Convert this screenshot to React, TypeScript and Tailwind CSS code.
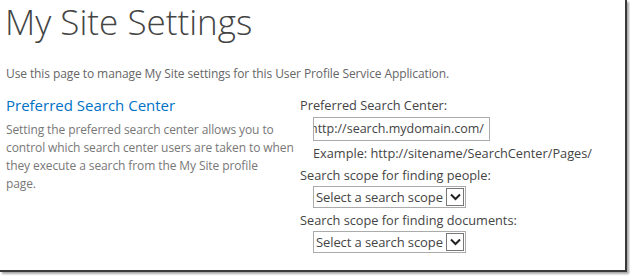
const font = { fontFamily: '"Open Sans", "Noto Sans", sans-serif' };

function ScopeSelect() {
  return (
    <div className="ml-[13px] flex h-[22px] w-[153px] items-center border border-[#ababab] bg-white">
      <span className="flex-1 whitespace-nowrap pl-[2px] text-[13px] leading-none tracking-[-0.1px] text-[#444]">
        Select a search scope
      </span>
      <span className="mr-[1px] flex h-[18px] w-[18px] items-center justify-center border border-[#777] bg-white">
        <svg width="11" height="8" viewBox="0 0 11 8">
          <path d="M1 1.5 L5.5 6 L10 1.5" fill="none" stroke="#222" strokeWidth="2" />
        </svg>
      </span>
    </div>
  );
}

export default function App() {
  return (
    <div className="h-[276px] w-[630px] overflow-hidden bg-white" style={font}>
      <div className="h-[272px] w-[627px] border-r-2 border-b-2 border-[#3a3a3a] bg-white shadow-[2px_2px_2px_rgba(0,0,0,0.35)]">
        <h1 className="pl-[5px] text-[35px] font-light leading-[44px] text-[#444]">My Site Settings</h1>
        <p className="mt-[21px] pl-[6px] text-[12px] leading-[18px] tracking-[-0.1px] text-[#666]">
          Use this page to manage My Site settings for this User Profile Service Application.
        </p>

        <div className="mt-[11px] flex">
          <div className="w-[300px] pl-[6px]">
            <h2 className="text-[15px] leading-[22px] text-[#0072c6]">Preferred Search Center</h2>
            <p className="mt-[5px] w-[292px] text-[12px] leading-[18px] tracking-[-0.1px] text-[#777]">
              Setting the preferred search center allows you to
              <br />
              control which search center users are taken to when
              <br />
              they execute a search from the My Site profile
              <br />
              page.
            </p>
          </div>

          <div className="flex flex-col text-[12.75px] text-[#444]">
            <div className="leading-[22px]">Preferred Search Center:</div>
            <div className="mt-[1px] ml-[13px] h-[24px] w-[177px] overflow-hidden border border-[#ababab] bg-white">
              <span className="-ml-[4px] block whitespace-nowrap text-[12.5px] leading-[22px] text-[#444]">
                http://search.mydomain.com/
              </span>
            </div>
            <div className="mt-[1px] ml-[13px] leading-[22px]">Example: http://sitename/SearchCenter/Pages/</div>
            <div className="leading-[22px]">Search scope for finding people:</div>
            <ScopeSelect />
            <div className="mt-[1px] leading-[22px]">Search scope for finding documents:</div>
            <ScopeSelect />
          </div>
        </div>
      </div>
    </div>
  );
}
